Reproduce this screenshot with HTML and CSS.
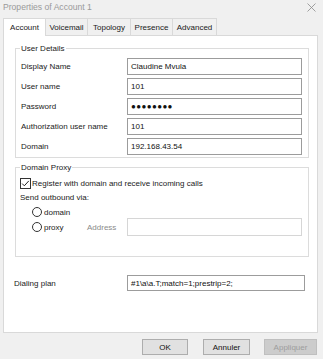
FILE: index.html
```html
<!DOCTYPE html>
<html>
<head>
<meta charset="utf-8">
<link rel="stylesheet" href="styles.css">
</head>
<body>
<div class="window">
  <div class="titlebar">
    <span class="title">Properties of Account 1</span>
    <svg class="close" width="9" height="9" viewBox="0 0 9 9"><path d="M0.5 0.5L8.5 8.5M8.5 0.5L0.5 8.5" stroke="#8a8a8a" stroke-width="0.8" fill="none"/></svg>
  </div>
  <div class="tabs">
    <div class="tab active t1">Account</div>
    <div class="tab t2">Voicemail</div>
    <div class="tab t3">Topology</div>
    <div class="tab t4">Presence</div>
    <div class="tab t5">Advanced</div>
  </div>
  <div class="panel">
    <div class="group g-user">
      <div class="legend">User Details</div>
      <div class="form">
        <label>Display Name</label><div class="input">Claudine Mvula</div>
        <label>User name</label><div class="input">101</div>
        <label>Password</label><div class="input pw">●●●●●●●●</div>
        <label>Authorization user name</label><div class="input">101</div>
        <label>Domain</label><div class="input">192.168.43.54</div>
      </div>
    </div>
    <div class="group g-proxy">
      <div class="legend">Domain Proxy</div>
      <div class="check-row">
        <span class="checkbox"><svg width="11" height="11" viewBox="0 0 11 11"><rect x="0.5" y="0.5" width="10" height="10" fill="#fff" stroke="#333" stroke-width="1"/><path d="M2.2 5.6L4.3 7.8L8.8 2.9" stroke="#222" stroke-width="1" fill="none"/></svg></span>
        <span>Register with domain and receive incoming calls</span>
      </div>
      <div class="sub">Send outbound via:</div>
      <div class="radio-row r-domain"><span class="radio"></span><span>domain</span></div>
      <div class="radio-row r-proxy">
        <div class="radio-opt"><span class="radio"></span><span>proxy</span></div>
        <span class="addr-label">Address</span>
        <div class="input disabled"></div>
      </div>
    </div>
    <div class="dial-row">
      <label>Dialing plan</label>
      <div class="input">#1\a\a.T;match=1;prestrip=2;</div>
    </div>
  </div>
  <div class="buttons">
    <div class="btn b-ok">OK</div>
    <div class="btn b-cancel">Annuler</div>
    <div class="btn b-apply disabled">Appliquer</div>
  </div>
</div>
</body>
</html>
```

FILE: styles.css
```css
html, body {
  margin: 0;
  padding: 0;
}
body {
  width: 323px;
  height: 359px;
  background: #f0f0f0;
  font-family: "Liberation Sans", Arial, sans-serif;
  font-size: 8px;
  color: #1a1a1a;
  overflow: hidden;
}
.window {
  display: flex;
  flex-direction: column;
}
.titlebar {
  height: 14px;
  display: flex;
  align-items: center;
  justify-content: space-between;
  padding: 0 7px 0 3px;
}
.title {
  font-size: 8.6px;
  color: #9a9a9a;
}
.close {
  display: block;
}
.tabs {
  display: flex;
  margin: 4px 0 0 3px;
  height: 17px;
  position: relative;
  z-index: 1;
}
.tab {
  box-sizing: border-box;
  border: 1px solid #d9d9d9;
  border-bottom: none;
  margin-left: -1px;
  display: flex;
  align-items: center;
  justify-content: center;
  height: 17px;
  background: #f0f0f0;
}
.tab.t1 { margin-left: 0; width: 43px; }
.tab.t2 { width: 43px; }
.tab.t3 { width: 44px; }
.tab.t4 { width: 43px; }
.tab.t5 { width: 45px; }
.tab.active {
  background: #fff;
  height: 18px;
}
.panel {
  box-sizing: border-box;
  margin: 0 5px 0 3px;
  height: 298px;
  background: #fff;
  border: 1px solid #d9d9d9;
  display: flex;
  flex-direction: column;
}
.group {
  position: relative;
  border: 1px solid #dcdcdc;
  margin: 12px 8px 0 11px;
}
.legend {
  position: absolute;
  top: -6px;
  left: 4px;
  padding: 0 1px;
  line-height: 11px;
  background: #fff;
}
.g-user {
  padding: 9px 6px 2px 5px;
}
.form {
  display: grid;
  grid-template-columns: 106px 1fr;
  row-gap: 3px;
  align-items: center;
}
.input {
  box-sizing: border-box;
  height: 17px;
  border: 1px solid #9c9c9c;
  background: #fff;
  padding: 0 3px;
  display: flex;
  align-items: center;
  color: #111;
  white-space: nowrap;
}
.input.pw {
  font-size: 8px;
  letter-spacing: 0.4px;
}
.input.disabled {
  border-color: #d6d6d6;
  height: 18px;
}
.g-proxy {
  margin-top: 9px;
  padding: 9px 6px 20px 4px;
}
.check-row {
  display: flex;
  align-items: center;
  gap: 1px;
  height: 12px;
}
.checkbox {
  display: flex;
  width: 11px;
  height: 11px;
}
.sub {
  margin-top: 3px;
  line-height: 11px;
}
.radio-row {
  display: flex;
  align-items: center;
  padding-left: 12px;
}
.r-domain {
  margin-top: 3px;
  height: 12px;
  gap: 2px;
}
.r-proxy {
  display: grid;
  grid-template-columns: 55px 40px 1fr;
  align-items: center;
}
.radio-opt {
  display: flex;
  align-items: center;
  gap: 2px;
}
.radio {
  box-sizing: border-box;
  width: 10px;
  height: 10px;
  border: 1px solid #333;
  border-radius: 50%;
  background: #fff;
}
.addr-label {
  color: #8a8a8a;
}
.dial-row {
  display: grid;
  grid-template-columns: 113px 1fr;
  align-items: center;
  margin: 18px 12px 0 10px;
}
.dial-row .input {
  height: 16px;
}
.buttons {
  display: flex;
  justify-content: flex-end;
  margin-top: 6px;
  padding-right: 6px;
}
.btn {
  box-sizing: border-box;
  height: 16px;
  border: 1px solid #adadad;
  background: #e1e1e1;
  display: flex;
  align-items: center;
  justify-content: center;
  color: #111;
}
.b-ok { width: 46px; }
.b-cancel { width: 47px; margin-left: 15px; }
.b-apply { width: 53px; margin-left: 14px; }
.btn.disabled {
  border-color: #bfbfbf;
  background: #cccccc;
  color: #9d9d9d;
}
```
